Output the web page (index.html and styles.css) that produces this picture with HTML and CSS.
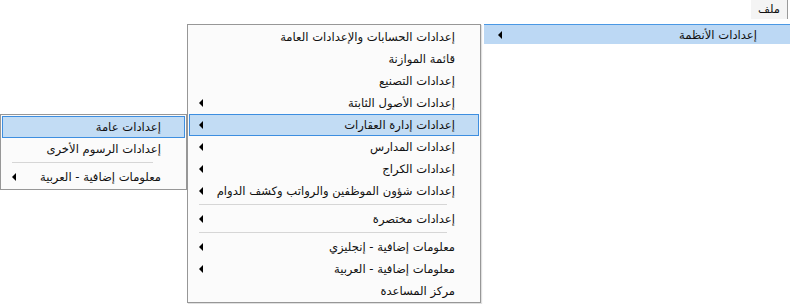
FILE: index.html
```html
<!DOCTYPE html>
<html lang="ar" dir="rtl">

<head>
    <meta charset="UTF-8">
    <title>ملف</title>
    <link rel="stylesheet" href="styles.css">
</head>

<body>

    <div class="menubar">
        <div class="menubar-item">ملف</div>
    </div>

    <div class="menu menu-top">
        <div class="menu-item open">
            <span class="label">إعدادات الأنظمة</span>
            <span class="arrow"></span>
        </div>
    </div>

    <div class="menu menu-systems">
        <div class="menu-item"><span class="label">إعدادات الحسابات والإعدادات العامة</span></div>
        <div class="menu-item"><span class="label">قائمة الموازنة</span></div>
        <div class="menu-item"><span class="label">إعدادات التصنيع</span></div>
        <div class="menu-item"><span class="label">إعدادات الأصول الثابتة</span><span class="arrow"></span></div>
        <div class="menu-item active"><span class="label">إعدادات إدارة العقارات</span><span class="arrow"></span></div>
        <div class="menu-item"><span class="label">إعدادات المدارس</span><span class="arrow"></span></div>
        <div class="menu-item"><span class="label">إعدادات الكراج</span><span class="arrow"></span></div>
        <div class="menu-item"><span class="label">إعدادات شؤون الموظفين والرواتب وكشف الدوام</span><span class="arrow"></span></div>
        <div class="separator"></div>
        <div class="menu-item"><span class="label">إعدادات مختصرة</span><span class="arrow"></span></div>
        <div class="separator"></div>
        <div class="menu-item"><span class="label">معلومات إضافية - إنجليزي</span><span class="arrow"></span></div>
        <div class="menu-item"><span class="label">معلومات إضافية - العربية</span><span class="arrow"></span></div>
        <div class="menu-item"><span class="label">مركز المساعدة</span></div>
    </div>

    <div class="menu menu-realestate">
        <div class="menu-item active"><span class="label">إعدادات عامة</span></div>
        <div class="menu-item"><span class="label">إعدادات الرسوم الأخرى</span></div>
        <div class="separator"></div>
        <div class="menu-item"><span class="label">معلومات إضافية - العربية</span><span class="arrow"></span></div>
    </div>

</body>

</html>
```

FILE: styles.css
```css
body {
    margin: 0;
    background: #ffffff;
    font-family: "DejaVu Sans", "Noto Sans", sans-serif;
    font-size: 11.6px;
    color: #111111;
    position: relative;
    height: 304px;
    overflow: hidden;
}

.menubar {
    display: flex;
    height: 19px;
    padding-right: 2px;
}

.menubar-item {
    padding: 0 7px;
    line-height: 18px;
    background: #f4f4f4;
    border-right: 1px solid #9a9a9a;
}

.menu {
    position: absolute;
    background: #fbfbfb;
    border: 1px solid #979797;
    box-sizing: border-box;
    padding: 1px;
}

.menu-top {
    top: 24px;
    left: 484px;
    width: 320px;
    border: none;
    padding: 0;
    background: transparent;
}

.menu-systems {
    top: 24px;
    left: 187px;
    width: 294px;
    height: 279px;
    box-shadow: 1px 1px 1px rgba(0, 0, 0, 0.12);
}

.menu-realestate {
    top: 114px;
    left: 0;
    width: 187px;
    height: 76px;
}

.menu-item {
    display: flex;
    align-items: center;
    height: 22px;
    box-sizing: border-box;
    padding: 0 23px 0 9px;
    border: 1px solid transparent;
    white-space: nowrap;
}

.menu-item .arrow {
    margin-right: auto;
    width: 0;
    height: 0;
    border-top: 4px solid transparent;
    border-bottom: 4px solid transparent;
    border-left: 4px solid #000000;
    transform: scaleX(-1);
}

.menu-item.active {
    background: #c2dcf4;
    border-color: #3d8ee0;
}

.menu-top .menu-item {
    height: 20px;
    padding: 0 47px 0 14px;
    background: #bcd8f4;
    border: none;
    border-top: 1px solid #4a98e4;
}

.separator {
    height: 1px;
    background: #d6d6d6;
    margin: 2px 32px 3px 10px;
}
```
